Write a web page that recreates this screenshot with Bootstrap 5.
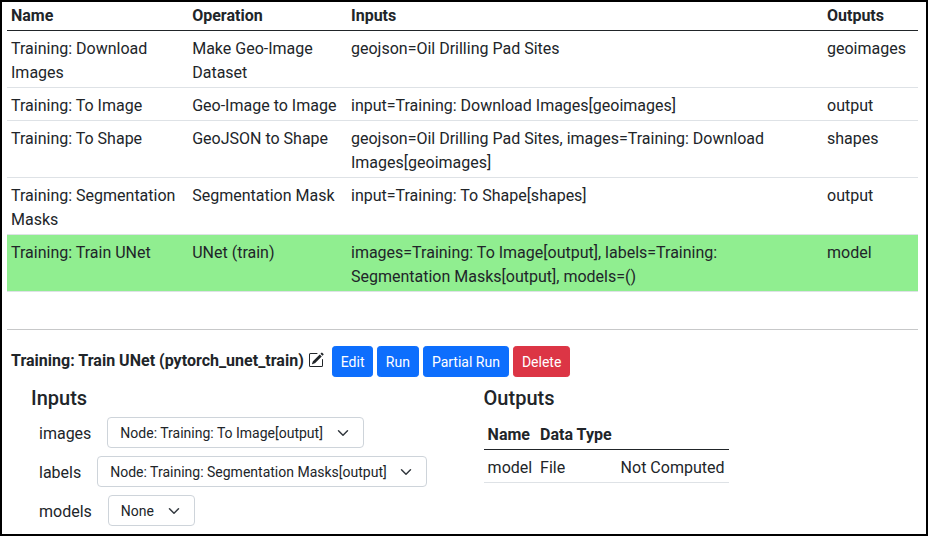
<!DOCTYPE html>
<html lang="en">
<head>
<meta charset="utf-8">
<meta name="viewport" content="width=device-width, initial-scale=1">
<title>Training: Train UNet</title>
<link href="https://cdn.jsdelivr.net/npm/bootstrap@5.3.0/dist/css/bootstrap.min.css" rel="stylesheet">
<style>
  body { font-family: Roboto, sans-serif; }
  .frame { height: 536px; border: 2px solid #000; padding: 0 8px 0 5px; }
  .table { --bs-border-color: #dee2e6; border-collapse: separate; border-spacing: 0; }
  .table > thead th { border-bottom: 1px solid #212529; }
  .table > tbody td, .out-table > thead th { padding-top: 6px; padding-bottom: 2px; }
  .node-table { table-layout: fixed; }
  .node-table > thead th { padding-top: 2px; padding-bottom: 2px; }
  .col-name { width: 181.2px; }
  .col-op { width: 158.8px; }
  .col-out { width: 95px; }
  .node-table > tbody > tr.selected > * { background-color: #90ee90; }
  .divider { margin: 37px 0 16px; }
  .node-title { margin-top: -2px; letter-spacing: .015px; }
  .btn-sm { height: 31px; padding: 5px 8px 3px; border-radius: 3.2px; }
  .btn-edit { width: 41px; }
  .edit-icon { width: 16px; height: 16px; margin: -3px 8px 0 4px; }
  .inputs-col { width: 453px; padding-left: 24px; }
  .section-title { padding-top: 1px; margin-bottom: 7px; }
  .input-row { height: 31px; margin-bottom: 8px; padding-left: 8px; }
  .input-row > span { padding-top: 2px; }
  .form-select-sm { padding: 5px 36px 3px 12px; border-color: #ced4da; }
  .sel-images { width: 257px; margin-left: 16px; }
  .sel-labels { width: 330px; margin-left: 16px; }
  .sel-models { width: 87px; margin-left: 16px; }
  .outputs-col { padding-left: 23.6px; }
  .out-table { width: 245px; table-layout: fixed; }
  .out-name { width: 52.5px; }
  .out-type { width: 80.5px; }
</style>
</head>
<body>
<div class="frame overflow-hidden">
  <table class="table table-sm node-table mb-0">
    <colgroup><col class="col-name"><col class="col-op"><col><col class="col-out"></colgroup>
    <thead>
      <tr><th>Name</th><th>Operation</th><th>Inputs</th><th>Outputs</th></tr>
    </thead>
    <tbody>
      <tr><td>Training: Download Images</td><td>Make Geo-Image Dataset</td><td>geojson=Oil Drilling Pad Sites</td><td>geoimages</td></tr>
      <tr><td>Training: To Image</td><td class="text-nowrap">Geo-Image to Image</td><td>input=Training: Download Images[geoimages]</td><td>output</td></tr>
      <tr><td>Training: To Shape</td><td>GeoJSON to Shape</td><td>geojson=Oil Drilling Pad Sites, images=Training: Download Images[geoimages]</td><td>shapes</td></tr>
      <tr><td>Training: Segmentation Masks</td><td class="text-nowrap">Segmentation Mask</td><td>input=Training: To Shape[shapes]</td><td>output</td></tr>
      <tr class="selected"><td>Training: Train UNet</td><td>UNet (train)</td><td>images=Training: To Image[output], labels=Training: Segmentation Masks[output], models=()</td><td>model</td></tr>
    </tbody>
  </table>

  <hr class="divider">

  <div class="d-flex align-items-center ps-1">
    <strong class="node-title">Training: Train UNet (pytorch_unet_train)</strong>
    <svg class="edit-icon" viewBox="0 0 16 16" fill="currentColor" aria-hidden="true">
      <path d="M15.502 1.94a.5.5 0 0 1 0 .706L14.459 3.69l-2-2L13.502.646a.5.5 0 0 1 .707 0l1.293 1.293zm-1.75 2.456-2-2L4.939 9.21a.5.5 0 0 0-.121.196l-.805 2.414a.25.25 0 0 0 .316.316l2.414-.805a.5.5 0 0 0 .196-.12l6.813-6.814z"/>
      <path fill-rule="evenodd" d="M1 13.5A1.5 1.5 0 0 0 2.5 15h11a1.5 1.5 0 0 0 1.5-1.5v-6a.5.5 0 0 0-1 0v6a.5.5 0 0 1-.5.5h-11a.5.5 0 0 1-.5-.5v-11a.5.5 0 0 1 .5-.5H9a.5.5 0 0 0 0-1H2.5A1.5 1.5 0 0 0 1 2.5v11z"/>
    </svg>
    <div class="d-flex gap-1">
      <button type="button" class="btn btn-primary btn-sm btn-edit">Edit</button>
      <button type="button" class="btn btn-primary btn-sm">Run</button>
      <button type="button" class="btn btn-primary btn-sm">Partial Run</button>
      <button type="button" class="btn btn-danger btn-sm">Delete</button>
    </div>
  </div>

  <div class="d-flex pt-2">
    <div class="inputs-col flex-shrink-0">
      <h5 class="section-title">Inputs</h5>
      <div class="input-row d-flex align-items-center">
        <span>images</span>
        <select class="form-select form-select-sm sel-images" aria-label="images"><option>Node: Training: To Image[output]</option></select>
      </div>
      <div class="input-row d-flex align-items-center">
        <span>labels</span>
        <select class="form-select form-select-sm sel-labels" aria-label="labels"><option>Node: Training: Segmentation Masks[output]</option></select>
      </div>
      <div class="input-row d-flex align-items-center">
        <span>models</span>
        <select class="form-select form-select-sm sel-models" aria-label="models"><option>None</option></select>
      </div>
    </div>
    <div class="outputs-col">
      <h5 class="section-title">Outputs</h5>
      <table class="table table-sm out-table mb-0">
        <colgroup><col class="out-name"><col class="out-type"><col></colgroup>
        <thead><tr><th>Name</th><th class="text-nowrap">Data Type</th><th></th></tr></thead>
        <tbody><tr><td>model</td><td>File</td><td class="text-nowrap">Not Computed</td></tr></tbody>
      </table>
    </div>
  </div>
</div>
<script src="https://cdn.jsdelivr.net/npm/bootstrap@5.3.0/dist/js/bootstrap.bundle.min.js"></script>
</body>
</html>
